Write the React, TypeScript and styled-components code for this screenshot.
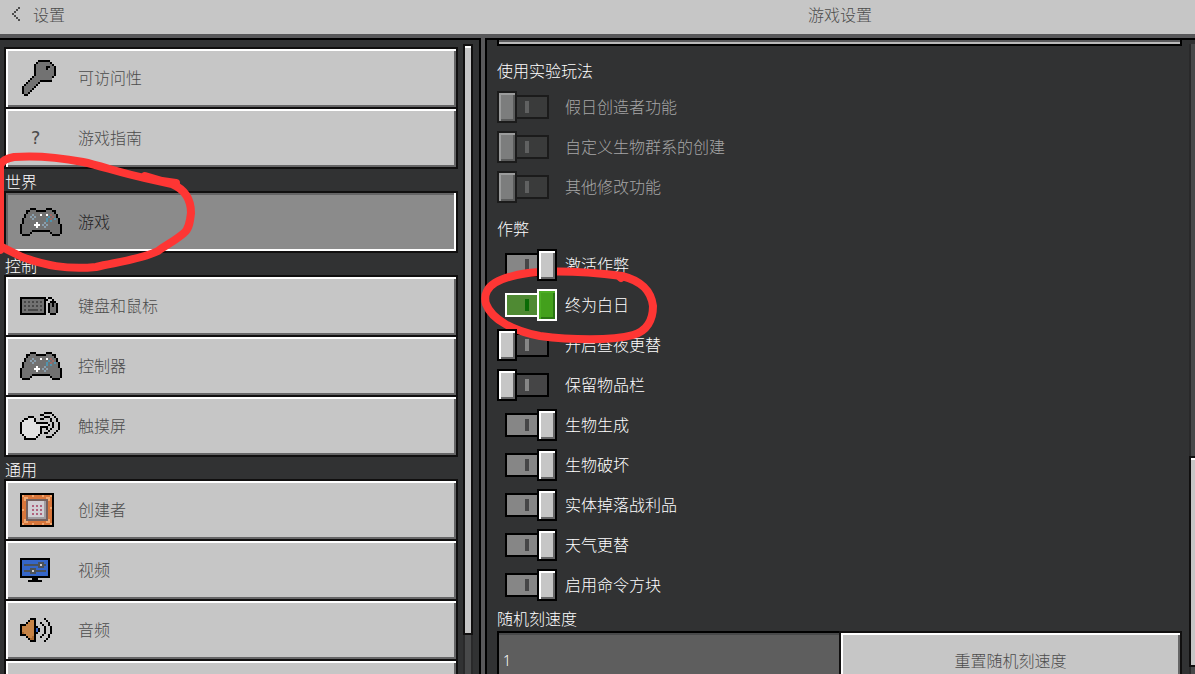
import React from "react";
import styled, { createGlobalStyle, css } from "styled-components";

const GlobalStyle = createGlobalStyle`
  *, *::before, *::after { box-sizing: border-box; }
  body { margin: 0; }
  body, button, input {
    font-family: "Noto Sans CJK SC", "Noto Sans", sans-serif;
    font-size: 16px;
    font-weight: 300;
    line-height: 20px;
  }
`;

/* ---------- pixel icons ---------- */

const palette: Record<string, string> = {
  "#": "#000000",
  g: "#727272",
  d: "#484848",
  l: "#8a8a8a",
  w: "#ffffff",
  e: "#e2e2e2",
  b: "#8a9fae",
  c: "#4f93ad",
  r: "#a06a66",
  o: "#d8763b",
  p: "#f0a871",
  n: "#75605d",
  s: "#a09ca0",
  t: "#d0ced3",
  m: "#b0617c",
  u: "#3566c8",
  y: "#4c5257",
  k: "#c58346",
  h: "#a8672f",
};

const icons = {
  key: [
    "........######...",
    ".......#gggggg#..",
    "......#gggggggg#.",
    "......#ggggg##gg#",
    "......#ggggg#lgg#",
    "......#ggggggggg#",
    "......#ggggggggg#",
    "......#ggggggggg#",
    ".....#ggggggggg#.",
    "....#gggggggggg..",
    "...#ggggg######..",
    "..#ggggg#........",
    ".#ggggg#.........",
    "#ggggg#..........",
    "#gggg#...........",
    "#ggg#............",
    "#gg#.............",
    ".##..............",
  ],
  pad: [
    ".....###.....###.....",
    "...##ggg#####ggg##...",
    "...#ggggggggggggg#...",
    "..#gggbgggwggwgrgg#..",
    "..#ggbgbggggggcgrg#..",
    ".#ggggbggggggcgrgcg#.",
    ".#gggggggggggcgcggg#.",
    ".#ggggggwgggbgggggg#.",
    "#ggggggwwwgbgbgggggg#",
    "#gggggggwgggbggggggg#",
    "#ggggggggggggggggggg#",
    "#ggggg#########ggggg#",
    "#gggg#.........#gggg#",
    ".####...........####.",
  ],
  keyboard: [
    "#############.##...",
    "#ggggggggggg##..#..",
    "#gdgdgdgdgdg#..###.",
    "#ggggggggggg#.#g#g#",
    "#gdgdgdgdgdg#.#g#g#",
    "#ggggggggggg#.#ggg#",
    "#gdgdddddgdg#.#ggg#",
    "#ggggggggggg#.#ggg#",
    "#############..###.",
  ],
  touch: [
    "............####....",
    "..........##....#...",
    "....###.....###..#..",
    "..##eee#..##...#..#.",
    ".#eeeee#.......#..#.",
    "#eeeeeee######..#..#",
    "#eeeeeeeeeeeee#.#..#",
    "#eeeeeeeee####..#..#",
    "#eeeeeeeee#..#.#...#",
    "#eeeeeeeee#...#...#.",
    "#eeeeeeeee#.##...#..",
    ".#eeeeeee#......#...",
    "..#eeeee#....###....",
    "..######............",
  ],
  creator: [
    "#################",
    "#poooopoooopooop#",
    "#oppoooooooooppo#",
    "#opnnnnnnnnnnnpo#",
    "#oonttttttttsnoo#",
    "#oonttttttttsnoo#",
    "#oonttmtmtmtsnoo#",
    "#oonttttttttsnop#",
    "#ponttmtmtmtsnoo#",
    "#oonttttttttsnoo#",
    "#oonttmtmtmtsnoo#",
    "#oonttttttttsnoo#",
    "#oonsssssssssnoo#",
    "#opnnnnnnnnnnnpo#",
    "#oppoooooooooppo#",
    "#poooopoooopooop#",
    "#################",
  ],
  video: [
    "###############",
    "#uuuuuuuuuuuuu#",
    "#uuuuuuuuyyyuu#",
    "#uyyyyyyyytyyu#",
    "#uuuuuuuuyyyuu#",
    "#uuuuyyyuuuuuu#",
    "#uyyyytyyyyyyu#",
    "#uuuuyyyuuuuuu#",
    "#uuuuuuuuuuuuu#",
    "###############",
    "......###......",
    "....#######....",
  ],
  audio: [
    ".....###....#...",
    "....#kk#.....#..",
    "...#kkk#..#...#.",
    "###kkkk#...#..#.",
    "#kkkkkk##...#..#",
    "#kkkkkk#u#..#..#",
    "#kkkkkk#u#..#..#",
    "#hkkkkk##...#..#",
    "###kkkk#...#..#.",
    "...#kkh#..#...#.",
    "....#hh#.....#..",
    ".....###....#...",
  ],
  back: [
    "...#",
    "..#.",
    ".#..",
    "#...",
    ".#..",
    "..#.",
    "...#",
  ],
};

type IconName = keyof typeof icons;

function PixelIcon({ name, ink }: { name: IconName; ink?: string }) {
  const rows = icons[name];
  const w = rows[0].length;
  const h = rows.length;
  return (
    <svg width={w * 2} height={h * 2} viewBox={`0 0 ${w} ${h}`} shapeRendering="crispEdges" aria-hidden="true">
      {rows.flatMap((row, y) =>
        [...row].map((c, x) =>
          palette[c] ? <rect key={`${x}-${y}`} x={x} y={y} width="1" height="1" fill={ink ?? palette[c]} /> : null
        )
      )}
    </svg>
  );
}

/* ---------- frame ---------- */

const columns = css`
  display: grid;
  grid-template-columns: 481fr 4px 710fr;
`;

const Page = styled.div`
  position: relative;
  display: flex;
  flex-direction: column;
  height: 100vh;
  overflow: hidden;
  background: #58585a;
`;

const Header = styled.header`
  ${columns}
  flex: none;
  height: 34px;
  margin-bottom: 4px;
  padding-bottom: 6px;
  align-items: center;
  background: #c6c6c6;
  color: #4c4c4c;
`;

const BackButton = styled.button`
  display: flex;
  align-items: center;
  gap: 13px;
  padding: 0 0 0 12px;
  border: 0;
  background: none;
  color: inherit;
`;

const Title = styled.h1`
  grid-column: 3;
  margin: 0;
  font-size: 16px;
  font-weight: 300;
  text-align: center;
`;

const Body = styled.div`
  ${columns}
  flex: 1;
  min-height: 0;
`;

const Panel = styled.section<{ $side: "left" | "right" }>`
  display: flex;
  min-width: 0;
  min-height: 0;
  overflow: hidden;
  background: #313233;
  border-top: 2px solid #000;
  ${(p) =>
    p.$side === "left"
      ? css`
          padding: 0 6px 0 4px;
          gap: 5px;
          border-right: 2px solid #000;
        `
      : css`
          grid-column: 3;
          padding-left: 10px;
          gap: 7px;
          border-left: 2px solid #000;
        `}
`;

/* ---------- scroll bars ---------- */

const ScrollTrack = styled.div<{ $width: number; $rows: string }>`
  display: grid;
  flex: none;
  grid-template-rows: ${(p) => p.$rows};
  width: ${(p) => p.$width}px;
  margin-top: 4px;
  overflow: hidden;
`;

const TrackPart = styled.div`
  width: 10px;
  background: #48494a;
  border: solid #29292a;
  border-width: 0 2px;
`;

const Thumb = styled.div`
  width: 10px;
  background: #c6c6c6;
  border: 2px solid #100f0f;
  box-shadow: inset 0 2px #fff;
`;

/* ---------- sidebar ---------- */

const bevel = css`
  box-shadow: inset 2px 2px #fff, inset -2px -2px #656566;
`;

const Nav = styled.nav`
  flex: 1;
  min-width: 0;
  padding-top: 7px;
`;

const GroupLabel = styled.h2`
  margin: 0;
  height: 22px;
  padding: 2px 0 0 1px;
  font-size: 16px;
  font-weight: 300;
  color: #fff;
`;

const NavItem = styled.button<{ $selected?: boolean }>`
  display: flex;
  align-items: center;
  width: 100%;
  height: 62px;
  padding: 0 14px;
  border: 2px solid #100f0f;
  background: #c6c6c6;
  color: #4c4c4c;
  text-align: left;
  ${bevel}
  & + & { margin-top: -2px; }
  ${(p) =>
    p.$selected &&
    css`
      background: #8b8b8b;
      color: #1e1e1f;
      box-shadow: inset 0 -2px #fff, inset -2px 0 #fff, inset 2px 2px #656566;
    `}
`;

const IconSlot = styled.span<{ $indent?: number }>`
  display: flex;
  flex: none;
  width: 58px;
  padding-left: ${(p) => p.$indent ?? 0}px;
`;

const ItemText = styled.span`
  padding-bottom: 2px;
`;

const QuestionMark = styled.span`
  font-family: "DejaVu Sans Mono", monospace;
  font-size: 18px;
`;

type Item = { label: string; icon?: IconName; indent?: number; selected?: boolean };

const groups: { title?: string; items: Item[] }[] = [
  { items: [{ label: "可访问性", icon: "key", indent: 2 }, { label: "游戏指南", indent: 10 }] },
  { title: "世界", items: [{ label: "游戏", icon: "pad", selected: true }] },
  {
    title: "控制",
    items: [
      { label: "键盘和鼠标", icon: "keyboard" },
      { label: "控制器", icon: "pad" },
      { label: "触摸屏", icon: "touch" },
    ],
  },
  {
    title: "通用",
    items: [
      { label: "创建者", icon: "creator" },
      { label: "视频", icon: "video" },
      { label: "音频", icon: "audio" },
    ],
  },
];

/* ---------- settings ---------- */

const Settings = styled.div`
  flex: 1;
  min-width: 0;
`;

const PreviousField = styled.div`
  height: 6px;
  border: solid #000;
  border-width: 0 2px 2px;
  background: #b9b9b9;
  box-shadow: inset 0 2px #58585a;
`;

const SectionTitle = styled.h2<{ $height: number; $gap: number }>`
  display: flex;
  align-items: flex-end;
  height: ${(p) => p.$height}px;
  margin: 0;
  padding-bottom: ${(p) => p.$gap}px;
  font-size: 16px;
  font-weight: 300;
  color: #fff;
`;

const ToggleRow = styled.label<{ $disabled?: boolean }>`
  display: grid;
  grid-template-columns: 68px 1fr;
  align-items: center;
  height: 40px;
  color: ${(p) => (p.$disabled ? "#a6a6a6" : "#fff")};
`;

type Tone = "plain" | "focus" | "disabled";

const tones = {
  plain: { edge: "#000", on: "#868686", off: "#454546", markOn: "#464647", markOff: "#868686", knob: "#c6c6c6", light: "#fff", shade: "#656566" },
  focus: { edge: "#fff", on: "#4f8a33", off: "#4f8a33", markOn: "#0b6b06", markOff: "#0b6b06", knob: "#43a01c", light: "#4cae24", shade: "#2a7514" },
  disabled: { edge: "#1b1b1b", on: "#3a3b3b", off: "#3a3b3b", markOn: "#606161", markOff: "#606161", knob: "#7c7d7d", light: "#9b9c9c", shade: "#5a5b5b" },
};

const Switch = styled.input<{ $tone: Tone }>`
  appearance: none;
  display: flex;
  align-items: center;
  width: 52px;
  height: 32px;
  margin: 0;
  &::before {
    content: "";
    order: 1;
    width: 34px;
    height: 24px;
    border: 2px solid ${(p) => tones[p.$tone].edge};
    background: linear-gradient(${(p) => tones[p.$tone].markOff} 0 0) left 8px center / 4px 12px no-repeat
      ${(p) => tones[p.$tone].off};
  }
  &::after {
    content: "";
    z-index: 1;
    width: 20px;
    height: 32px;
    margin-right: -2px;
    border: 2px solid ${(p) => tones[p.$tone].edge};
    background: ${(p) => tones[p.$tone].knob};
    box-shadow: inset 2px 2px ${(p) => tones[p.$tone].light}, inset -2px -2px ${(p) => tones[p.$tone].shade};
  }
  &:checked { margin-left: 8px; }
  &:checked::before {
    order: 0;
    background: linear-gradient(${(p) => tones[p.$tone].markOn} 0 0) right 8px center / 4px 12px no-repeat
      ${(p) => tones[p.$tone].on};
  }
  &:checked::after {
    order: 1;
    margin: 0 0 0 -2px;
  }
`;

const FieldRow = styled.div`
  display: grid;
  grid-template-columns: 342fr 343fr;
  height: 60px;
`;

const TextBox = styled.input`
  min-width: 0;
  padding: 0 4px;
  border: 2px solid #000;
  border-right: 0;
  border-radius: 0;
  background: #5e5e5e;
  box-shadow: inset 0 2px #48494a;
  color: #fff;
  font-family: "Noto Sans", sans-serif;
  font-size: 14px;
`;

const ResetButton = styled.button`
  border: 2px solid #100f0f;
  padding: 0 0 2px;
  background: #c6c6c6;
  color: #4c4c4c;
  ${bevel}
`;

const experiments = ["假日创造者功能", "自定义生物群系的创建", "其他修改功能"];

const cheats: { label: string; on: boolean; tone?: Tone }[] = [
  { label: "激活作弊", on: true },
  { label: "终为白日", on: true, tone: "focus" },
  { label: "开启昼夜更替", on: false },
  { label: "保留物品栏", on: false },
  { label: "生物生成", on: true },
  { label: "生物破坏", on: true },
  { label: "实体掉落战利品", on: true },
  { label: "天气更替", on: true },
  { label: "启用命令方块", on: true },
];

/* ---------- hand-drawn marks ---------- */

const Marks = styled.svg`
  position: absolute;
  top: 0;
  left: 0;
  pointer-events: none;
`;

export default function App() {
  return (
    <Page>
      <GlobalStyle />
      <Header>
        <BackButton type="button">
          <PixelIcon name="back" ink="#4c4c4c" />
          设置
        </BackButton>
        <Title>游戏设置</Title>
      </Header>
      <Body>
        <Panel $side="left">
          <Nav>
            {groups.map((group, i) => (
              <React.Fragment key={i}>
                {group.title && <GroupLabel>{group.title}</GroupLabel>}
                {group.items.map((item) => (
                  <NavItem type="button" key={item.label} $selected={item.selected}>
                    <IconSlot $indent={item.indent}>
                      {item.icon ? <PixelIcon name={item.icon} /> : <QuestionMark>?</QuestionMark>}
                    </IconSlot>
                    <ItemText>{item.label}</ItemText>
                  </NavItem>
                ))}
              </React.Fragment>
            ))}
            <NavItem as="div" />
          </Nav>
          <ScrollTrack $width={10} $rows="591fr 39fr">
            <Thumb />
            <TrackPart />
          </ScrollTrack>
        </Panel>
        <Panel $side="right">
          <Settings>
            <PreviousField />
            <SectionTitle $height={41} $gap={7}>使用实验玩法</SectionTitle>
            {experiments.map((label) => (
              <ToggleRow key={label} $disabled>
                <Switch type="checkbox" disabled $tone="disabled" />
                <ItemText>{label}</ItemText>
              </ToggleRow>
            ))}
            <SectionTitle $height={38} $gap={7}>作弊</SectionTitle>
            {cheats.map(({ label, on, tone = "plain" }) => (
              <ToggleRow key={label}>
                <Switch type="checkbox" defaultChecked={on} $tone={tone} />
                <ItemText>{label}</ItemText>
              </ToggleRow>
            ))}
            <SectionTitle as="label" htmlFor="tick-speed" $height={26} $gap={3}>随机刻速度</SectionTitle>
            <FieldRow>
              <TextBox id="tick-speed" defaultValue="1" />
              <ResetButton type="button">重置随机刻速度</ResetButton>
            </FieldRow>
          </Settings>
          <ScrollTrack $width={6} $rows="412fr 211fr 7fr">
            <TrackPart />
            <Thumb />
            <TrackPart />
          </ScrollTrack>
        </Panel>
      </Body>
      <Marks width="670" height="350" fill="none" stroke="#fe3634" strokeWidth="8" strokeLinecap="round" strokeLinejoin="round" aria-hidden="true">
        <path d="M0 250 L0 166 Q2 159 14 157 C40 155 62 158 83 162 C102 166 120 173 145 178 L172 184 C186 190 191 200 191 213 C190 222 189 229 184 233 C176 240 168 244 158 251 C142 259 118 262 96 267 C66 270 44 265 22 257 L0 246" />
        <path d="M145 176 L162 181 L176 183" />
        <path d="M487 291 C492 281 508 276 528 273 C556 270 590 272 622 276 C642 281 651 291 653 306 C653 320 647 331 633 335 C612 341 570 340 540 336 C514 331 492 320 486 304 Q484 297 487 291" />
        <path d="M620 277 L621 278" />
      </Marks>
    </Page>
  );
}
